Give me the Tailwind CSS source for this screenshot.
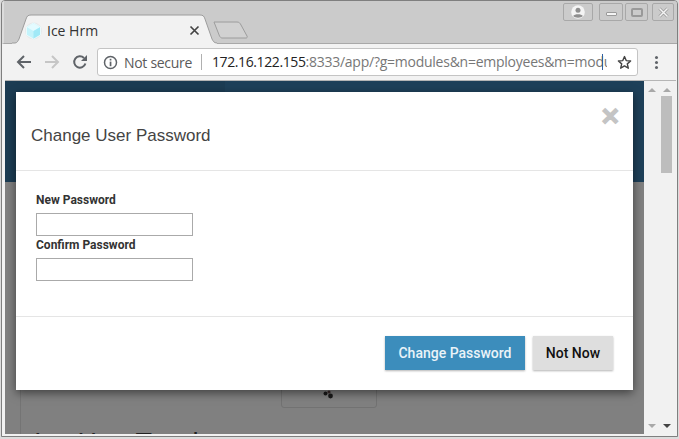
<!DOCTYPE html>
<html lang="en">
<head>
  <meta charset="UTF-8" />
  <title>Ice Hrm</title>
  <script src="https://cdn.jsdelivr.net/npm/@tailwindcss/browser@4"></script>
</head>
<body class="w-[679px] h-[439px] overflow-hidden bg-[#dcdcdc]">
  <!-- browser window -->
  <div class="ml-[1px] w-[677px] h-[437px] flex flex-col border border-[#7f7f7f] rounded-t-[4px] overflow-hidden font-['Open_Sans',sans-serif]">

    <!-- tab strip -->
    <div class="relative h-[43px] shrink-0 bg-[#cbcbcb] border-l-2 border-l-[#dcdcdc] border-b border-b-[#a8a8a8]">
      <svg class="absolute left-[8px] top-[13px]" width="210" height="31" viewBox="0 0 210 31" fill="none">
        <path d="M0 31 V29 H3 C5 29 6 27 7 25 L14 5 C15 2 16 1 19 1 H188 C191 1 192 2 193 5 L200 25 C201 27 202 29 205 29 V31 Z" fill="#f2f2f2"/>
        <path d="M0 29 H3 C5 29 6 27 7 25 L14 5 C15 2 16 1 19 1 H188 C191 1 192 2 193 5 L200 25 C201 27 202 29 205 29" stroke="#9c9c9c"/>
      </svg>
      <svg class="absolute left-[209px] top-[20px]" width="36" height="18" viewBox="0 0 36 18" fill="none">
        <path d="M1 1 H24 C26 1 27 2 28 4 L34 15 C34.6 16.4 34 17 33 17 H9 C8 17 7 16 6.5 15 Z" fill="#d1d1d1" stroke="#9c9c9c"/>
      </svg>
      <svg class="absolute left-[21px] top-[21px]" width="17" height="18" viewBox="0 0 17 18">
        <circle cx="8.5" cy="9" r="8.5" fill="#e6e9ea"/>
        <path d="M8.5 1 L15.5 5 V13 L8.5 17 L1.5 13 V5 Z" fill="#c4f3fb" stroke="#eefcfe" stroke-width="0.8" stroke-linejoin="round"/>
        <path d="M8.5 9 L15 5.2 L8.5 1.6 L2 5.2 Z" fill="#e4fbff"/>
        <path d="M8.5 9 V16.4 L15 12.7 V5.2 Z" fill="#a0e9f7"/>
      </svg>
      <span class="absolute left-[43px] top-[20px] text-[14px] leading-[20px] text-[#333333]">Ice Hrm</span>
      <svg class="absolute left-[185px] top-[24px]" width="11" height="11" viewBox="0 0 11 11" stroke="#444444" stroke-width="1.7" fill="none"><path d="M1.5 1.5 L9.5 9.5 M9.5 1.5 L1.5 9.5"/></svg>

      <!-- window controls -->
      <div class="absolute right-[3px] top-[2px] flex">
        <div class="w-[30px] h-[18px] rounded-[2px] border border-[#a8a8a8] flex items-center justify-center">
          <svg width="14" height="14" viewBox="0 0 14 14"><circle cx="7" cy="7" r="6.8" fill="#f4f4f4"/><circle cx="7" cy="5.3" r="2.5" fill="#8f8f8f"/><path d="M2.2 11 C3.5 8.6 10.5 8.6 11.8 11 C10 13.2 4 13.2 2.2 11Z" fill="#8f8f8f"/></svg>
        </div>
        <div class="ml-[6px] w-[24px] h-[18px] rounded-[2px] border border-[#a8a8a8] flex items-center justify-center"><div class="w-[11px] h-[4px] bg-[#f4f4f4] border border-[#9a9a9a] rounded-[1px] mt-[3px]"></div></div>
        <div class="ml-[2px] w-[23px] h-[18px] rounded-[2px] border border-[#a8a8a8] flex items-center justify-center"><div class="w-[12px] h-[9px] border-2 border-[#999999] rounded-[2px]"></div></div>
        <div class="ml-[4px] w-[22px] h-[18px] rounded-[2px] border border-[#a8a8a8] flex items-center justify-center">
          <svg width="11" height="11" viewBox="0 0 11 11" fill="none"><path d="M1.5 1.5 L9.5 9.5 M9.5 1.5 L1.5 9.5" stroke="#9a9a9a" stroke-width="3"/><path d="M1.5 1.5 L9.5 9.5 M9.5 1.5 L1.5 9.5" stroke="#f4f4f4" stroke-width="1.5"/></svg>
        </div>
      </div>
    </div>

    <div class="flex-1 min-h-0 flex flex-col bg-[#f2f2f2] pl-[3px] pr-[1px] pb-[2px]">
      <!-- toolbar -->
      <div class="h-[37px] shrink-0 border-b border-[#b5b5b5] flex items-center">
        <div class="w-[92px] shrink-0 flex items-center pl-[11px] gap-[12px]">
          <svg width="16" height="16" viewBox="0 0 16 16" fill="none" stroke="#5f6368" stroke-width="2"><path d="M15 8 H2 M8 2 L2 8 L8 14"/></svg>
          <svg width="16" height="16" viewBox="0 0 16 16" fill="none" stroke="#c6c6c6" stroke-width="2"><path d="M1 8 H14 M8 2 L14 8 L8 14"/></svg>
          <svg width="16" height="16" viewBox="0 0 16 16" fill="none"><path d="M13.4 9.5 A5.7 5.7 0 1 1 12 4" stroke="#5f6368" stroke-width="2"/><path d="M15 1 V7 H9 Z" fill="#5f6368"/></svg>
        </div>
        <div class="relative w-[541px] h-[28px] bg-white border border-[#c4c4c4] rounded-[3px] flex items-center text-[14px] text-[#5a5a5a]">
          <svg class="ml-[5px]" width="15" height="15" viewBox="0 0 15 15" fill="none"><circle cx="7.5" cy="7.5" r="6" stroke="#5f6368" stroke-width="1.5"/><rect x="6.7" y="6.6" width="1.7" height="4.6" fill="#5f6368"/><rect x="6.7" y="3.8" width="1.7" height="1.7" fill="#5f6368"/></svg>
          <span class="ml-[6px] w-[68px] whitespace-nowrap tracking-[-0.3px]">Not secure</span>
          <span class="ml-[9px] w-px h-[16px] bg-[#b0b0b0]"></span>
          <span class="ml-[10px] w-[395px] overflow-hidden whitespace-nowrap h-[20px] leading-[20px]"><span class="text-[#222222] tracking-[-0.4px]">172.16.122.155</span><span class="text-[#777777] tracking-[-0.25px]">:8333/app/?g=modules&amp;n=employees&amp;m=module_Employees</span></span>
          <span class="absolute left-[504px] top-[5px] w-px h-[16px] bg-[#2f5f9f]"></span>
          <svg class="ml-[10px]" width="15" height="15" viewBox="0 0 15 15" fill="none"><path d="M7.5 1.6 L9.2 5.6 L13.6 6 L10.3 8.9 L11.3 13.2 L7.5 10.9 L3.7 13.2 L4.7 8.9 L1.4 6 L5.8 5.6 Z" stroke="#444444" stroke-width="1.4" stroke-linejoin="round"/></svg>
        </div>
        <div class="ml-[17px] flex flex-col gap-[2px]">
          <span class="w-[3px] h-[3px] rounded-full bg-[#5f6368]"></span>
          <span class="w-[3px] h-[3px] rounded-full bg-[#5f6368]"></span>
          <span class="w-[3px] h-[3px] rounded-full bg-[#5f6368]"></span>
        </div>
      </div>

      <!-- viewport -->
      <div class="flex-1 flex min-h-0">
        <div class="relative flex-1 min-w-0 flex flex-col bg-[#808080] overflow-hidden">
          <div class="h-[101px] shrink-0 flex bg-[#1e4059]">
            <div class="w-[220px] bg-[#1c3c53]"></div>
          </div>
          <!-- dimmed page behind the dialog -->
          <div class="flex-1 ml-[15px] border-l border-[#747474] relative">
            <div class="absolute left-[260px] top-[190px] w-[96px] h-[36px] border border-[#727272] rounded-[3px] flex items-end justify-center pb-[8px]">
              <svg width="12" height="9" viewBox="0 0 12 9"><circle cx="2.5" cy="3.5" r="2" fill="#191919"/><circle cx="6" cy="2" r="1.6" fill="#3a2a2a"/><circle cx="7.5" cy="6" r="2.4" fill="#191919"/></svg>
            </div>
            <p class="absolute left-[13px] top-[246px] text-[27px] leading-[30px] text-[#222222] font-['Liberation_Sans',sans-serif] whitespace-nowrap">Ice Hrm Teach</p>
          </div>

          <!-- dialog -->
          <div class="absolute left-[11px] top-[11px] w-[617px] h-[298px] bg-white shadow-[0_3px_9px_rgba(0,0,0,0.5)] flex flex-col">
            <div class="relative h-[79px] shrink-0 border-b border-[#e5e5e5] pl-[15px] pt-[34px]">
              <h3 class="text-[17px] leading-[20px] text-[#444444] font-['Liberation_Sans',sans-serif]">Change User Password</h3>
              <span class="absolute right-[14px] top-[7px] text-[30px] leading-[33px] font-bold text-[#c4c4c4] [-webkit-text-stroke:1.2px_#c4c4c4] font-['Liberation_Sans',sans-serif]">×</span>
            </div>
            <div class="h-[146px] shrink-0 border-b border-[#e5e5e5] pl-[20px] pt-[21px] font-['Roboto',sans-serif] text-[12px] font-bold text-[#333333]">
              <label class="block leading-[16px] mb-[5px]">New Password</label>
              <div class="w-[157px] h-[23px] border border-[#aaaaaa]"></div>
              <label class="block leading-[16px] mt-[1px] mb-[5px]">Confirm Password</label>
              <div class="w-[157px] h-[23px] border border-[#aaaaaa]"></div>
            </div>
            <div class="flex justify-end gap-[8px] pr-[20px] pt-[19px] font-['Roboto',sans-serif] text-[14px] font-medium">
              <button class="w-[140px] h-[34px] bg-[#3c8dbc] text-[#eaf3f8] shadow-[0_1px_2px_rgba(0,0,0,0.3)]">Change Password</button>
              <button class="w-[80px] h-[34px] bg-[#dedede] text-[#111111] shadow-[0_1px_2px_rgba(0,0,0,0.3)]">Not Now</button>
            </div>
          </div>
        </div>

        <!-- scrollbar -->
        <div class="w-[32px] shrink-0 bg-[#f1f1f1] flex flex-col pt-[7px] pb-[6px]">
          <div class="flex gap-[7px] pl-[4px]">
            <span class="w-0 h-0 border-x-[4px] border-x-transparent border-b-[4px] border-b-[#a8a8a8]"></span>
            <span class="w-0 h-0 border-x-[4px] border-x-transparent border-b-[4px] border-b-[#a8a8a8]"></span>
          </div>
          <div class="w-[11px] h-[77px] mt-[4px] ml-[17px] bg-[#bdbdbd]"></div>
          <div class="flex-1"></div>
          <div class="flex gap-[7px] pl-[4px]">
            <span class="w-0 h-0 border-x-[4px] border-x-transparent border-t-[4px] border-t-[#a8a8a8]"></span>
            <span class="w-0 h-0 border-x-[4px] border-x-transparent border-t-[4px] border-t-[#444444]"></span>
          </div>
        </div>
      </div>
    </div>
  </div>
</body>
</html>
